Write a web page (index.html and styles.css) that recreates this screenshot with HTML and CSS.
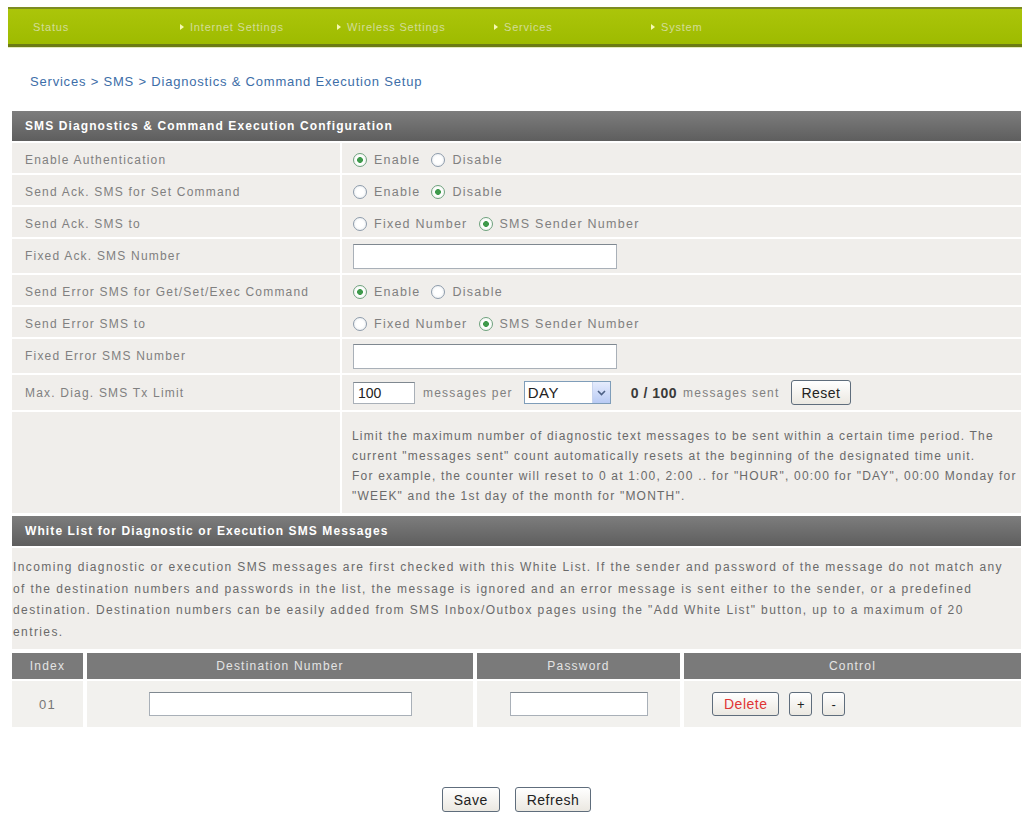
FILE: index.html
```html
<!DOCTYPE html>
<html lang="en">
<head>
  <meta charset="UTF-8" />
  <meta name="viewport" content="width=device-width, initial-scale=1.0" />
  <title>Diagnostics &amp; Command Execution Setup</title>
  <link rel="stylesheet" href="styles.css">
</head>
<body>
  <div class="page">
    <nav class="topnav">
      <a href="#" class="nav-item first">Status</a>
      <a href="#" class="nav-item"><span class="bullet"></span>Internet Settings</a>
      <a href="#" class="nav-item"><span class="bullet"></span>Wireless Settings</a>
      <a href="#" class="nav-item"><span class="bullet"></span>Services</a>
      <a href="#" class="nav-item"><span class="bullet"></span>System</a>
    </nav>

    <div class="content">
      <p class="crumb">Services &gt; SMS &gt; Diagnostics &amp; Command Execution Setup</p>

      <div class="section-head">SMS Diagnostics &amp; Command Execution Configuration</div>

      <div class="row">
        <div class="label">Enable Authentication</div>
        <div class="value">
          <label class="radio"><span class="dot on"></span>Enable</label>
          <label class="radio"><span class="dot"></span>Disable</label>
        </div>
      </div>
      <div class="row">
        <div class="label">Send Ack. SMS for Set Command</div>
        <div class="value">
          <label class="radio"><span class="dot"></span>Enable</label>
          <label class="radio"><span class="dot on"></span>Disable</label>
        </div>
      </div>
      <div class="row">
        <div class="label">Send Ack. SMS to</div>
        <div class="value">
          <label class="radio"><span class="dot"></span>Fixed Number</label>
          <label class="radio"><span class="dot on"></span>SMS Sender Number</label>
        </div>
      </div>
      <div class="row tall">
        <div class="label">Fixed Ack. SMS Number</div>
        <div class="value"><input type="text" class="text-input" /></div>
      </div>
      <div class="row">
        <div class="label">Send Error SMS for Get/Set/Exec Command</div>
        <div class="value">
          <label class="radio"><span class="dot on"></span>Enable</label>
          <label class="radio"><span class="dot"></span>Disable</label>
        </div>
      </div>
      <div class="row">
        <div class="label">Send Error SMS to</div>
        <div class="value">
          <label class="radio"><span class="dot"></span>Fixed Number</label>
          <label class="radio"><span class="dot on"></span>SMS Sender Number</label>
        </div>
      </div>
      <div class="row tall">
        <div class="label">Fixed Error SMS Number</div>
        <div class="value"><input type="text" class="text-input" /></div>
      </div>
      <div class="row limit">
        <div class="label">Max. Diag. SMS Tx Limit</div>
        <div class="value">
          <input type="text" class="text-input num" value="100" />
          <span class="per">messages per</span>
          <span class="select"><span class="select-val">DAY</span><span class="select-arrow"><svg width="9" height="6" viewBox="0 0 9 6"><polyline points="1,1 4.5,4.5 8,1" fill="none" stroke="#4d6185" stroke-width="1.6"/></svg></span></span>
          <span class="count">0 / 100</span>
          <span class="sent">messages sent</span>
          <button class="btn reset">Reset</button>
        </div>
      </div>
      <div class="row note">
        <div class="label"></div>
        <div class="value">
          Limit the maximum number of diagnostic text messages to be sent within a certain time period. The<br>
          current "messages sent" count automatically resets at the beginning of the designated time unit.<br>
          For example, the counter will reset to 0 at 1:00, 2:00 .. for "HOUR", 00:00 for "DAY", 00:00 Monday for<br>
          "WEEK" and the 1st day of the month for "MONTH".
        </div>
      </div>

      <div class="section-head wl">White List for Diagnostic or Execution SMS Messages</div>
      <div class="wl-note">
        Incoming diagnostic or execution SMS messages are first checked with this White List. If the sender and password of the message do not match any<br>
        of the destination numbers and passwords in the list, the message is ignored and an error message is sent either to the sender, or a predefined<br>
        destination. Destination numbers can be easily added from SMS Inbox/Outbox pages using the "Add White List" button, up to a maximum of 20<br>
        entries.
      </div>

      <div class="wl-table">
        <div class="th">Index</div>
        <div class="th">Destination Number</div>
        <div class="th">Password</div>
        <div class="th">Control</div>

        <div class="td idx">01</div>
        <div class="td center"><input type="text" class="text-input dest" /></div>
        <div class="td center"><input type="text" class="text-input pass" /></div>
        <div class="td ctrl">
          <button class="btn del">Delete</button>
          <button class="btn small">+</button>
          <button class="btn small">-</button>
        </div>
      </div>

      <div class="actions">
        <button class="btn">Save</button>
        <button class="btn">Refresh</button>
      </div>
    </div>
  </div>
</body>
</html>
```

FILE: styles.css
```css
html, body {
  margin: 0;
  padding: 0;
  background: #fff;
  font-family: "Liberation Sans", Arial, sans-serif;
  font-size: 12px;
  letter-spacing: 1.2px;
  color: #808080;
}

.page {
  padding: 7px 2px 0 8px;
}

/* top menu */
.topnav {
  height: 35px;
  border-top: 2px solid #7d8c22;
  border-bottom: 3px solid #6c7b14;
  background: linear-gradient(#abc50a, #9ebb00);
  box-shadow: 0 1px 0 #e4eabc;
  display: flex;
  align-items: center;
  padding-left: 25px;
}
.nav-item {
  width: 157px;
  display: flex;
  align-items: center;
  color: #d2dc98;
  font-size: 11px;
  letter-spacing: 0.8px;
  text-decoration: none;
}
.nav-item.first {
  width: 147px;
}
.bullet {
  width: 0;
  height: 0;
  border-left: 4px solid #f6f8b4;
  border-top: 3px solid transparent;
  border-bottom: 3px solid transparent;
  margin-right: 6px;
}

.content {
  margin: 0 1px 0 4px;
}

.crumb {
  margin: 27px 0 21px 18px;
  font-size: 13px;
  line-height: 16px;
  letter-spacing: 0.8px;
  color: #3d6ea8;
}

.section-head {
  height: 30px;
  line-height: 30px;
  padding-left: 13px;
  color: #fff;
  font-weight: bold;
  letter-spacing: 1.1px;
  background: linear-gradient(#7d7d7d, #5e5e5e);
}
.section-head.wl {
  margin-top: 3px;
}

/* form rows */
.row {
  display: grid;
  grid-template-columns: 328px 1fr;
  column-gap: 2px;
  margin-top: 2px;
  min-height: 30px;
}
.row > div {
  background: #f0eeeb;
  display: flex;
  align-items: center;
  padding-top: 3px;
  box-sizing: border-box;
}
.row.tall { min-height: 34px; }
.row.limit { min-height: 35px; }
.row.tall > div,
.row.limit > div { padding-top: 0; }
.label {
  padding-left: 13px;
}
.value {
  padding-left: 11px;
}
.value .radio {
  font-size: 12.5px;
  letter-spacing: 1.25px;
}
.row.note .value {
  display: block;
  padding: 14px 0 7px 10px;
  line-height: 20px;
  white-space: nowrap;
  color: #6a6a6a;
  letter-spacing: 1.2px;
}

.radio {
  display: inline-flex;
  align-items: center;
  margin-right: 11px;
}
.dot {
  width: 12px;
  height: 12px;
  border: 1px solid #8e9cab;
  border-radius: 50%;
  background: radial-gradient(circle, #fff 40%, #e4e8ec);
  margin-right: 7px;
}
.dot.on {
  border-color: #6fa27e;
  background: radial-gradient(circle, #3f9a4c 0, #3f9a4c 2.6px, #fff 3.2px, #eef2ee);
}

.text-input {
  width: 264px;
  height: 25px;
  box-sizing: border-box;
  border: 1px solid #a9b0b8;
  border-top-color: #7f8890;
  padding: 0 4px;
  font-family: "Liberation Sans", Arial, sans-serif;
  font-size: 14px;
  color: #222;
  background: #fff;
  margin: 0;
}
.text-input.num {
  width: 62px;
  height: 22px;
}
.text-input.dest { width: 263px; height: 24px; }
.text-input.pass { width: 138px; height: 24px; }

.per {
  margin: 0 11px 0 8px;
}
.select {
  display: inline-flex;
  width: 87px;
  height: 23px;
  box-sizing: border-box;
  border: 1px solid #7f9db9;
  background: #fff;
}
.select-val {
  flex: 1;
  padding-left: 3px;
  line-height: 21px;
  font-size: 15px;
  letter-spacing: 0.5px;
  color: #222;
}
.select-arrow {
  width: 17px;
  display: flex;
  align-items: center;
  justify-content: center;
  background: linear-gradient(#e6ecfd, #b9cbf4);
  border-left: 1px solid #c8d4ee;
}
.count {
  margin-left: 20px;
  font-size: 14px;
  font-weight: bold;
  letter-spacing: 0.5px;
  color: #3a3a3a;
}
.sent {
  margin: 0 12px 0 6px;
}

.btn {
  height: 25px;
  padding: 0 10px;
  font-family: "Liberation Sans", Arial, sans-serif;
  font-size: 14px;
  letter-spacing: 0.5px;
  color: #222;
  background: linear-gradient(#fff, #ebe8e1);
  border: 1px solid #5f6d7c;
  border-radius: 3px;
  cursor: pointer;
}
.btn.reset {
  padding: 0 9px;
}

/* white list */
.wl-note {
  margin-top: 2px;
  padding: 9px 0 6px 1px;
  line-height: 21.5px;
  white-space: nowrap;
  color: #6a6a6a;
  letter-spacing: 1.4px;
  background: #f0eeeb;
}

.wl-table {
  display: grid;
  grid-template-columns: 71px 386px 203px 1fr;
  column-gap: 4px;
  row-gap: 2px;
  margin-top: 4px;
}
.th {
  height: 26px;
  line-height: 26px;
  text-align: center;
  color: #e4e4e4;
  background: #7a7a7a;
}
.td {
  height: 46px;
  display: flex;
  align-items: center;
  background: #f2f1ee;
}
.td.idx,
.td.center {
  justify-content: center;
}
.td.idx {
  font-size: 13px;
  color: #777;
}
.td.ctrl {
  padding-left: 28px;
}
.btn.del {
  height: 24px;
  padding: 0 11px;
  color: #e03434;
}
.btn.small {
  height: 24px;
  width: 23px;
  padding: 0;
  margin-left: 10px;
  font-size: 13px;
}

.actions {
  margin-top: 60px;
  display: flex;
  justify-content: center;
  gap: 15px;
}
.actions .btn {
  padding: 0 11px;
}
```
